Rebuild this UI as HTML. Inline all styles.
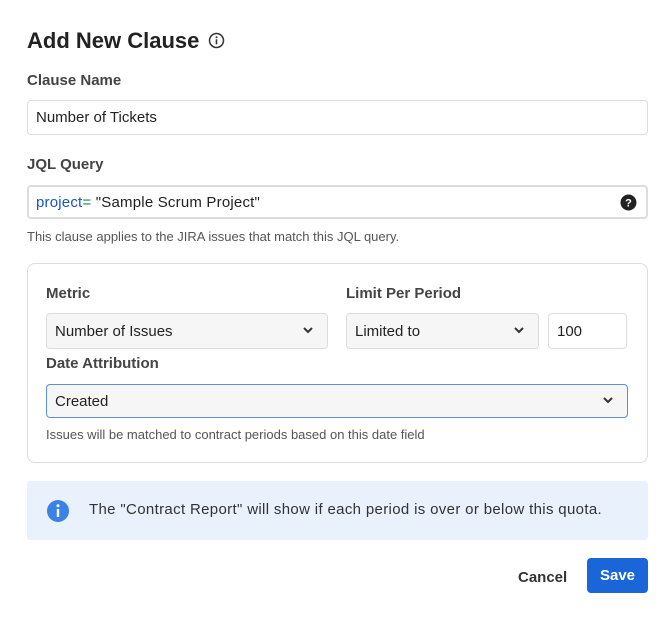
<!DOCTYPE html>
<html><head><style>
*{box-sizing:border-box;margin:0;padding:0}
body{width:672px;height:620px;background:#fff;font-family:"Liberation Sans",sans-serif;color:#222;position:relative;overflow:hidden}
.a{position:absolute}
.lbl{font-size:15px;font-weight:bold;color:#444}
.inp{border:1px solid #dcdcdc;border-radius:4px;background:#fff;font-size:15px;color:#222;padding-left:8px;display:flex;align-items:center}
.sel{background:#f6f6f6}
.chev{position:absolute;right:14px;top:50%;margin-top:-4px}
.help{font-size:13px;color:#555}
</style></head><body>
<div class="a" style="left:27px;top:28px;font-size:22px;font-weight:bold;color:#222">Add New Clause</div>
<svg class="a" style="left:208px;top:32px" width="17" height="17" viewBox="0 0 17 17"><circle cx="8.5" cy="8.5" r="7" fill="none" stroke="#333" stroke-width="1.5"/><rect x="7.7" y="7.3" width="1.6" height="5" fill="#333"/><circle cx="8.5" cy="5.2" r="1" fill="#333"/></svg>
<div class="a lbl" style="left:27px;top:72px">Clause Name</div>
<div class="a inp" style="left:27px;top:100px;width:621px;height:35px">Number of Tickets</div>
<div class="a lbl" style="left:27px;top:156px">JQL Query</div>
<div class="a inp" style="left:27px;top:185px;width:621px;height:34px;border:2px solid #ddd;padding-left:7px;letter-spacing:0.2px"><span style="color:#1a56c4">project</span><span style="color:#1a8a5a">=</span>&nbsp;"Sample Scrum Project"</div>
<svg class="a" style="left:620px;top:194px" width="17" height="17"><circle cx="8.5" cy="8.5" r="8" fill="#222"/><text x="8.5" y="12.5" font-size="11" font-weight="bold" fill="#fff" text-anchor="middle" font-family="Liberation Sans">?</text></svg>
<div class="a help" style="left:27px;top:229px">This clause applies to the JIRA issues that match this JQL query.</div>
<div class="a" style="left:27px;top:263px;width:621px;height:200px;border:1px solid #ddd;border-radius:8px"></div>
<div class="a lbl" style="left:46px;top:285px">Metric</div>
<div class="a lbl" style="left:346px;top:285px">Limit Per Period</div>
<div class="a inp sel" style="left:46px;top:313px;width:282px;height:36px">Number of Issues<svg class="chev" width="10" height="7"><path d="M1 1l4 4 4-4" fill="none" stroke="#333" stroke-width="2"/></svg></div>
<div class="a inp sel" style="left:346px;top:313px;width:193px;height:36px">Limited to<svg class="chev" width="10" height="7"><path d="M1 1l4 4 4-4" fill="none" stroke="#333" stroke-width="2"/></svg></div>
<div class="a inp" style="left:548px;top:313px;width:79px;height:36px">100</div>
<div class="a lbl" style="left:46px;top:355px">Date Attribution</div>
<div class="a inp sel" style="left:46px;top:384px;width:582px;height:34px;border:1px solid #5b8edb">Created<svg class="chev" width="10" height="7"><path d="M1 1l4 4 4-4" fill="none" stroke="#333" stroke-width="2"/></svg></div>
<div class="a help" style="left:46px;top:427px">Issues will be matched to contract periods based on this date field</div>
<div class="a" style="left:27px;top:481px;width:621px;height:59px;background:#e9f1fd;border-radius:3px"></div>
<svg class="a" style="left:46px;top:499px" width="24" height="24"><circle cx="12" cy="12" r="11" fill="#3b82e6"/><rect x="10.8" y="10" width="2.4" height="8" fill="#fff"/><circle cx="12" cy="6.8" r="1.5" fill="#fff"/></svg>
<div class="a" style="left:89px;top:501px;font-size:15px;color:#333;letter-spacing:0.34px">The "Contract Report" will show if each period is over or below this quota.</div>
<div class="a" style="left:518px;top:569px;font-size:15px;font-weight:bold;color:#333">Cancel</div>
<div class="a" style="left:587px;top:558px;width:61px;height:35px;background:#1a66d8;border-radius:4px;color:#fff;font-size:15px;font-weight:bold;display:flex;align-items:center;justify-content:center">Save</div>
</body></html>
